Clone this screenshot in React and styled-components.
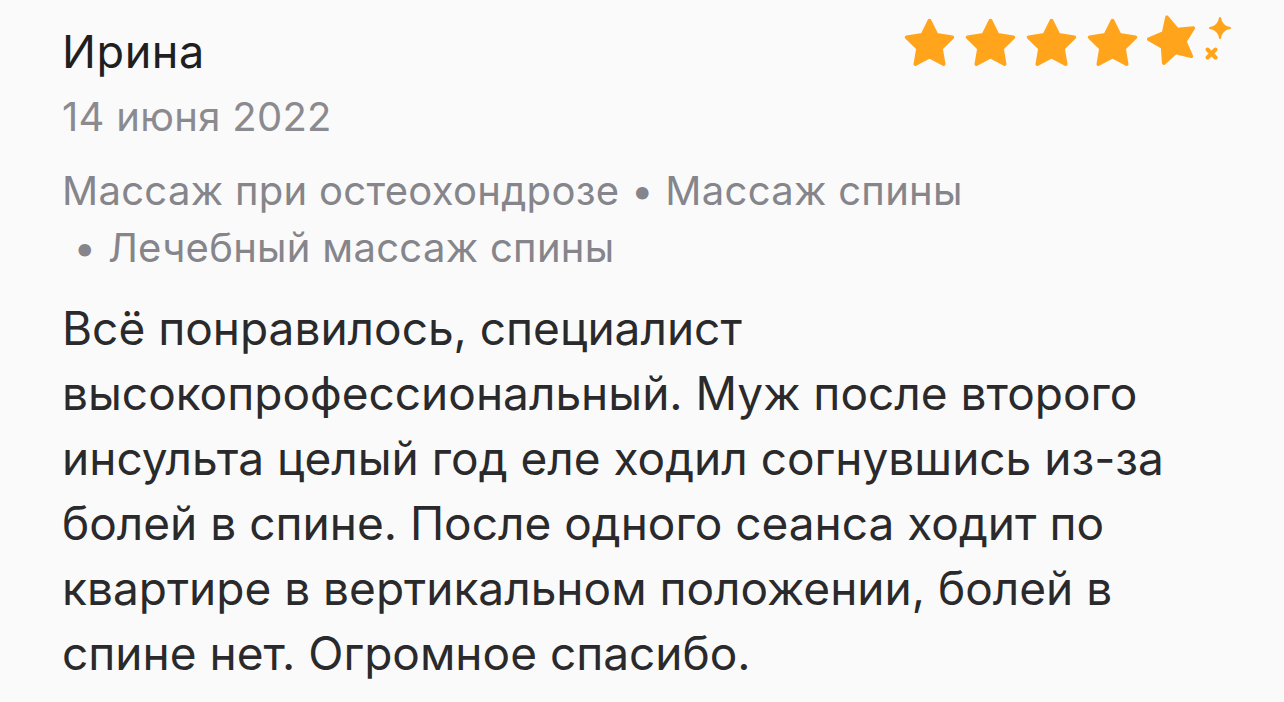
import React from "react";
import styled, { createGlobalStyle } from "styled-components";

const Global = createGlobalStyle`
  html, body { margin: 0; padding: 0; background: #fafafa; }
  body { font-family: Inter, "Noto Sans", sans-serif; -webkit-font-smoothing: antialiased; }
`;

const Card = styled.article`
  box-sizing: border-box;
  width: 1284px;
  min-height: 702px;
  padding: 16px 12px 0 62px;
  background: #fafafa;
`;

const Header = styled.header`
  display: flex;
  justify-content: space-between;
  align-items: flex-start;
  padding-right: 41px;
`;

const Who = styled.div`
  display: flex;
  flex-direction: column;
  padding-top: 6px;
`;

const Name = styled.div`
  font-size: 45px;
  line-height: 60px;
  letter-spacing: 0.6px;
  color: #1f1f21;
`;

const DateText = styled.div`
  margin-top: 7px;
  font-size: 40px;
  line-height: 56px;
  letter-spacing: 0.3px;
  color: #8a8a8f;
`;

const Stars = styled.div`
  display: flex;
  align-items: flex-start;
  gap: 6px;
`;

const StarSvg = styled.svg`
  width: 55px;
  height: 55px;
  display: block;
  transform: ${(p) => (p.$tilt ? "rotate(-14deg) translate(0px,-4px)" : "none")};
`;

const Sparkles = styled.svg`
  width: 30px;
  height: 50px;
  display: block;
  margin-left: -6px;
`;

const Tags = styled.div`
  display: flex;
  flex-wrap: wrap;
  margin-top: 17px;
  font-size: 40px;
  line-height: 57px;
  letter-spacing: 0.3px;
  color: #85858b;
`;

const Tag = styled.span`
  white-space: pre;
`;

const Body = styled.p`
  margin: 20px 0 0;
  font-size: 46px;
  line-height: 65px;
  color: #2a2a2c;
`;

const ORANGE = "#ffa41b";

function Star({ tilt }) {
  return (
    <StarSvg viewBox="0 0 24 24" $tilt={tilt}>
      <polygon
        points="12,2 15.09,8.26 22,9.27 17,14.14 18.18,21.02 12,17.77 5.82,21.02 7,14.14 2,9.27 8.91,8.26"
        fill={ORANGE}
        stroke={ORANGE}
        strokeWidth="1.6"
        strokeLinejoin="round"
      />
    </StarSvg>
  );
}

const tags = ["Массаж при остеохондрозе", "Массаж спины", "Лечебный массаж спины"];

const lines = [
  "Всё понравилось, специалист",
  "высокопрофессиональный. Муж после второго",
  "инсульта целый год еле ходил согнувшись из-за",
  "болей в спине. После одного сеанса ходит по",
  "квартире в вертикальном положении, болей в",
  "спине нет. Огромное спасибо.",
];

export default function App() {
  return (
    <>
      <Global />
      <Card>
        <Header>
          <Who>
            <Name>Ирина</Name>
            <DateText>14 июня 2022</DateText>
          </Who>
          <Stars>
            <Star />
            <Star />
            <Star />
            <Star />
            <Star tilt />
            <Sparkles viewBox="0 0 30 50">
              <path
                d="M19 2 Q20.3 10.7 29 12 Q20.3 13.3 19 22 Q17.7 13.3 9 12 Q17.7 10.7 19 2 Z"
                fill={ORANGE}
                stroke={ORANGE}
                strokeWidth="2"
                strokeLinejoin="round"
              />
              <path
                d="M6.5 33.5 L14.5 41.5 M14.5 33.5 L6.5 41.5"
                stroke={ORANGE}
                strokeWidth="4"
                strokeLinecap="round"
              />
            </Sparkles>
          </Stars>
        </Header>
        <Tags>
          {tags.map((t, i) => (
            <Tag key={t}>{i === 0 ? t : ` • ${t}`}</Tag>
          ))}
        </Tags>
        <Body>
          {lines.map((l, i) => (
            <React.Fragment key={i}>
              {l}
              {i < lines.length - 1 && <br />}
            </React.Fragment>
          ))}
        </Body>
      </Card>
    </>
  );
}
